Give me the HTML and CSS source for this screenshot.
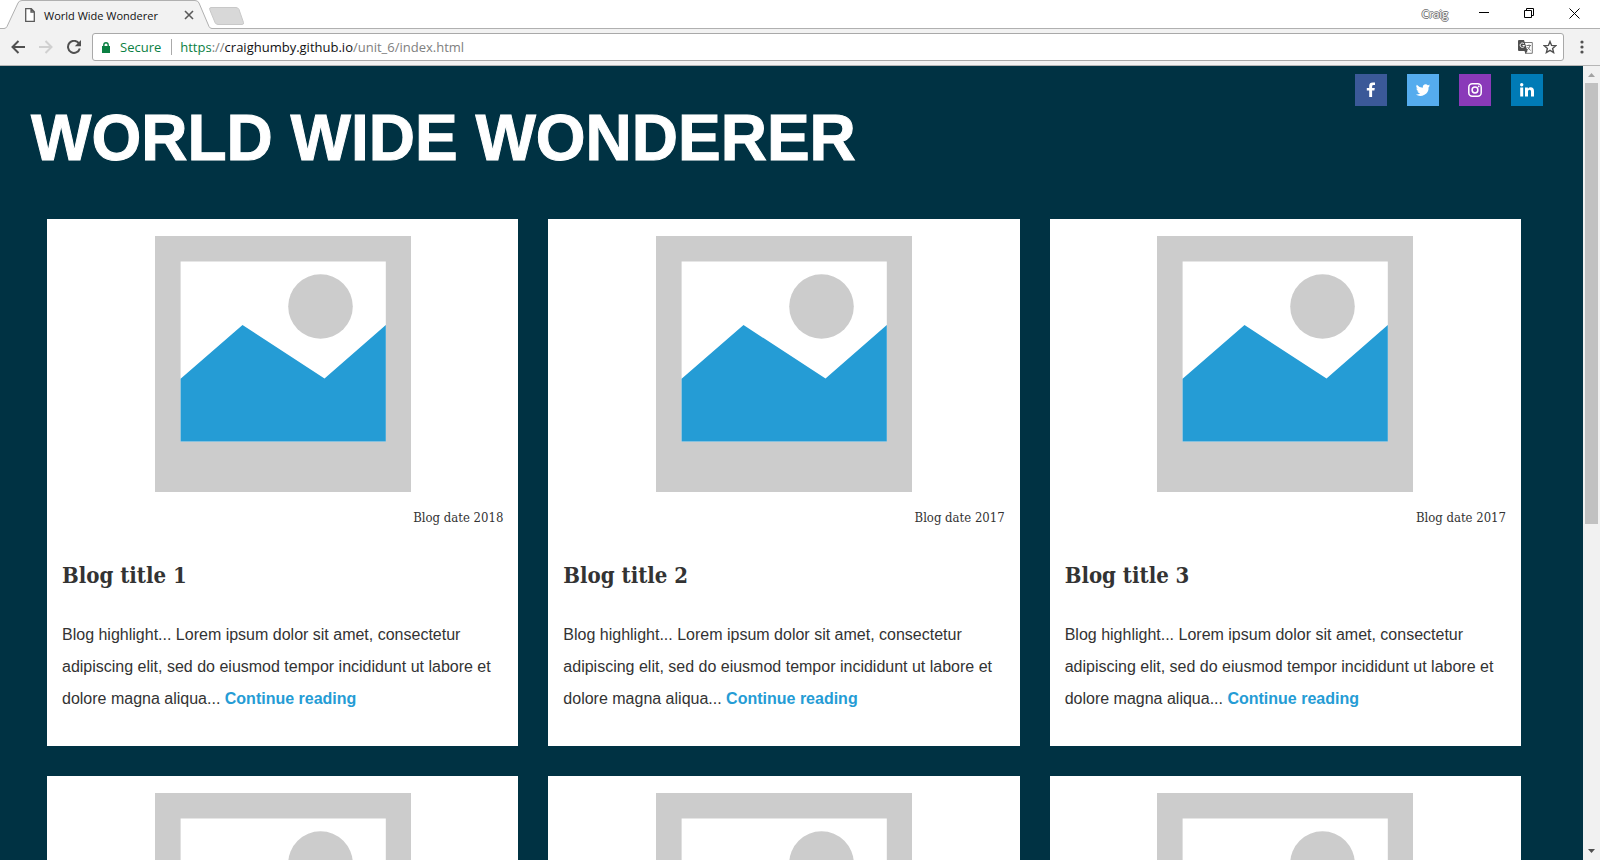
FILE: index.html
```html
<!DOCTYPE html>
<html lang="en">
<head>
<meta charset="utf-8">
<title>World Wide Wonderer</title>
<link rel="stylesheet" href="styles.css">
</head>
<body>
<svg class="defs" aria-hidden="true">
  <symbol id="photo" viewBox="0 0 256 256">
    <path fill="#ccc" d="M0 0h256v256H0z"/>
    <path fill="#fff" d="M25.600 25.600h205.200v180H25.600z"/>
    <circle cx="165.500" cy="70.500" r="32.300" fill="#ccc"/>
    <path fill="#259cd5" d="M25.600 142.700 87.500 89l82 53.500 61.300-53.500v116.500H25.600z"/>
  </symbol>
</svg>
<div class="browser">
  <div class="tabstrip">
    <div class="tab">
      <svg class="tab-shape" width="214" height="29" viewBox="0 0 214 29" aria-hidden="true"><path d="M0 28.500h4q2 0 3-2L18 3q1-2.500 4-2.500h173q3 0 4 2.500l10 23.500q1 2 3 2h2V29H0z" fill="#f2f2f2"/><path d="M0 28.500h4q2 0 3-2L18 3q1-2.500 4-2.500h173q3 0 4 2.500l10 23.500q1 2 3 2h2" fill="none" stroke="#b0b0b0"/></svg>
      <div class="tab-content">
        <svg width="10" height="14" viewBox="0 0 10 14" aria-hidden="true"><path d="M.7.700h5.600l3 3v9.600H.7zM6 .7V4h3.300" fill="#fff" stroke="#5a5a5a" stroke-width="1.300"/></svg>
        <span class="tab-title">World Wide Wonderer</span>
        <button class="plain" aria-label="Close tab"><svg width="10" height="10" viewBox="0 0 10 10"><path d="m1 1 8 8M9 1 1 9" stroke="#5a5a5a" stroke-width="1.600"/></svg></button>
      </div>
    </div>
    <button class="plain new-tab" aria-label="New tab"><svg width="35" height="18" viewBox="0 0 35 18"><path d="M2 .5h25q2 0 3 2l4.500 13q.5 2-1.500 2H9q-2 0-3-2L.7 2.500Q.2.500 2 .5z" fill="#d8d8d8" stroke="#c8c8c8"/></svg></button>
    <div class="window-controls">
      <span class="user">Craig</span>
      <button class="plain" aria-label="Minimize"><svg width="10" height="10" viewBox="0 0 10 10"><path d="M0 4.500h10" stroke="#000"/></svg></button>
      <button class="plain" aria-label="Restore"><svg width="10" height="10" viewBox="0 0 10 10"><path d="M.5 2.500h7v7h-7zM2.500 2V.5h7v7H8" fill="none" stroke="#000"/></svg></button>
      <button class="plain" aria-label="Close"><svg width="11" height="11" viewBox="0 0 11 11"><path d="m.5.500 10 10M10.500.500l-10 10" stroke="#000"/></svg></button>
    </div>
  </div>
  <div class="toolbar">
    <button class="plain" aria-label="Back"><svg width="14" height="14" viewBox="0 0 14 14"><path d="M14 7H1.500M7.500 1l-6 6 6 6" fill="none" stroke="#505050" stroke-width="2"/></svg></button>
    <button class="plain" aria-label="Forward"><svg width="14" height="14" viewBox="0 0 14 14"><path d="M0 7h12.500M6.500 1l6 6-6 6" fill="none" stroke="#d0d0d0" stroke-width="2"/></svg></button>
    <button class="plain" aria-label="Reload"><svg width="14" height="14" viewBox="0 0 14 14"><path d="M12 3.500A6 6 0 1 0 12.800 8.500" fill="none" stroke="#505050" stroke-width="2"/><path d="M14 0v6.200H7.800z" fill="#505050"/></svg></button>
    <div class="address">
      <svg width="8" height="11" viewBox="0 0 8 11" aria-hidden="true"><path d="M0 4h8v7H0z" fill="#0b8043"/><path d="M1.800 4.500V3a2.200 2.200 0 0 1 4.400 0v1.500" fill="none" stroke="#0b8043" stroke-width="1.400"/></svg>
      <span class="secure">Secure</span>
      <span class="url"><span class="scheme">https</span>://<span class="host">craighumby.github.io</span>/unit_6/index.html</span>
      <button class="plain" aria-label="Translate"><svg width="15" height="14" viewBox="0 0 15 14"><path d="M6 2.500h8.300v10.800H7.500" fill="#fff" stroke="#777"/><path d="M0 1q0-1 1-1h5l3.500 11H1q-1 0-1-1zM6.500 11h3l-2 3z" fill="#505050"/><path d="M6 3.800A2.200 2.200 0 1 0 6.500 5.500H4.500" fill="none" stroke="#fff"/><path d="M8.500 5.500h4.500M11 4.500v1M12 5.500q-.5 3-3 4.500M9.500 7l3 3.500" fill="none" stroke="#777"/></svg></button>
      <button class="plain" aria-label="Bookmark"><svg width="14" height="14" viewBox="0 0 14 14"><path d="m7 1.500 1.600 3.900 4.200.3-3.200 2.700 1 4.100L7 10.300l-3.600 2.200 1-4.100-3.200-2.700 4.200-.3z" fill="none" stroke="#505050" stroke-width="1.400"/></svg></button>
    </div>
    <button class="plain" aria-label="Menu"><svg width="4" height="14" viewBox="0 0 4 14"><g fill="#505050"><circle cx="2" cy="2" r="1.600"/><circle cx="2" cy="7" r="1.600"/><circle cx="2" cy="12" r="1.600"/></g></svg></button>
  </div>
  <div class="viewport">
    <div class="page">
      <header class="site-header">
        <h1>WORLD WIDE WONDERER</h1>
        <nav class="social" aria-label="Social links">
          <a class="facebook" href="#facebook" aria-label="Facebook"><svg width="16" height="16" viewBox="0 0 16 16"><path fill="#fff" d="M12 .6v2.500h-1.400q-1.500 0-1.500 1.400v1.400h2.700l-.4 2.600H9.100V15H6.200V8.500H3.800V5.900h2.400V3.900Q6.200.5 9.800.5q1.500 0 2.200.1z"/></svg></a>
          <a class="twitter" href="#twitter" aria-label="Twitter"><svg width="16" height="16" viewBox="0 0 24 24"><path fill="#fff" d="M22.600 5.400c-.8.400-1.600.6-2.500.7.900-.5 1.600-1.400 1.900-2.400-.8.500-1.800.9-2.800 1.100A4.400 4.400 0 0 0 11.700 8.700 12.500 12.500 0 0 1 2.700 4.100a4.400 4.400 0 0 0 1.400 5.900c-.7 0-1.400-.2-2-.6a4.400 4.400 0 0 0 3.500 4.400c-.6.200-1.300.2-2 .1a4.400 4.400 0 0 0 4.100 3.100 8.800 8.800 0 0 1-6.500 1.800A12.500 12.500 0 0 0 20.400 7.700c.9-.6 1.600-1.400 2.200-2.300z"/></svg></a>
          <a class="instagram" href="#instagram" aria-label="Instagram"><svg width="16" height="16" viewBox="0 0 16 16"><rect x="1.800" y="1.800" width="12.400" height="12.400" rx="3.500" fill="none" stroke="#fff" stroke-width="1.500"/><circle cx="8" cy="8" r="2.900" fill="none" stroke="#fff" stroke-width="1.500"/><circle cx="11.700" cy="4.400" r=".9" fill="#fff"/></svg></a>
          <a class="linkedin" href="#linkedin" aria-label="LinkedIn"><svg width="16" height="16" viewBox="0 0 16 16"><path fill="#fff" d="M1.200 5.500h3V14.500h-3zM6 5.500h2.900v1.200Q9.800 5.300 11.600 5.300q3.400 0 3.400 3.800V14.500h-3V9.600q0-1.900-1.500-1.900Q9 7.700 9 9.600V14.500H6z"/><circle cx="2.700" cy="2.700" r="1.700" fill="#fff"/></svg></a>
        </nav>
      </header>
      <main class="cards">
        <article class="card">
          <svg class="photo" role="img" aria-label="Placeholder"><use href="#photo"/></svg>
          <p class="date">Blog date 2018</p>
          <h2>Blog title 1</h2>
          <p>Blog highlight... Lorem ipsum dolor sit amet, consectetur adipiscing elit, sed do eiusmod tempor incididunt ut labore et dolore magna aliqua... <a href="#post-1">Continue reading</a></p>
        </article>
        <article class="card">
          <svg class="photo" role="img" aria-label="Placeholder"><use href="#photo"/></svg>
          <p class="date">Blog date 2017</p>
          <h2>Blog title 2</h2>
          <p>Blog highlight... Lorem ipsum dolor sit amet, consectetur adipiscing elit, sed do eiusmod tempor incididunt ut labore et dolore magna aliqua... <a href="#post-2">Continue reading</a></p>
        </article>
        <article class="card">
          <svg class="photo" role="img" aria-label="Placeholder"><use href="#photo"/></svg>
          <p class="date">Blog date 2017</p>
          <h2>Blog title 3</h2>
          <p>Blog highlight... Lorem ipsum dolor sit amet, consectetur adipiscing elit, sed do eiusmod tempor incididunt ut labore et dolore magna aliqua... <a href="#post-3">Continue reading</a></p>
        </article>
        <article class="card"><svg class="photo" role="img" aria-label="Placeholder"><use href="#photo"/></svg></article>
        <article class="card"><svg class="photo" role="img" aria-label="Placeholder"><use href="#photo"/></svg></article>
        <article class="card"><svg class="photo" role="img" aria-label="Placeholder"><use href="#photo"/></svg></article>
      </main>
    </div>
    <div class="scrollbar" aria-hidden="true">
      <svg width="17" height="17" viewBox="0 0 17 17"><path d="M5 11h7L8.500 7z" fill="#a3a3a3"/></svg>
      <div class="track"><div class="thumb"></div></div>
      <svg width="17" height="17" viewBox="0 0 17 17"><path d="M5 6h7l-3.500 4z" fill="#505050"/></svg>
    </div>
  </div>
</div>
</body>
</html>
```
FILE: styles.css
```css
* { box-sizing: border-box; }

body {
  margin: 0;
  font-family: "Liberation Sans", Arial, sans-serif;
  font-size: 16px;
  color: #333;
}

svg { display: block; flex: none; }

.defs { position: absolute; width: 0; height: 0; }

.plain {
  padding: 0;
  border: 0;
  background: none;
  flex: none;
}

.browser {
  display: flex;
  flex-direction: column;
  height: 100vh;
  overflow: hidden;
  font-family: "Open Sans", "Noto Sans", sans-serif;
}

/* Tab strip */
.tabstrip {
  display: flex;
  flex: none;
  height: 29px;
  background: #fff;
  border-bottom: 1px solid #b0b0b0;
}

.tab { display: grid; height: 29px; }
.tab > * { grid-area: 1 / 1; }

.tab-content {
  display: flex;
  align-items: center;
  padding: 1px 20px 0 25px;
  font-size: 11px;
  color: #111;
  z-index: 1;
}

.tab-title { flex: 1; padding-left: 9px; white-space: nowrap; }

.new-tab { align-self: flex-start; padding-top: 7px; margin-left: -5px; }

.window-controls {
  display: flex;
  align-items: center;
  gap: 35px;
  margin-left: auto;
  padding: 0 20px 2px 0;
}

.user {
  margin-right: -4px;
  font-size: 11px;
  color: #fff;
  text-shadow: 1px 0 #777, -1px 0 #777, 0 1px #777, 0 -1px #777;
}

/* Toolbar */
.toolbar {
  display: flex;
  flex: none;
  align-items: center;
  gap: 14px;
  height: 37px;
  padding: 0 16px 0 11px;
  background: #f2f2f2;
  border-bottom: 1px solid #b6b6b6;
}

.address {
  display: flex;
  flex: 1;
  align-items: center;
  gap: 10px;
  height: 28px;
  margin: 0 2px 0 -3px;
  padding: 0 6px 0 9px;
  background: #fff;
  border: 1px solid #a9a9a9;
  border-radius: 3px;
  font-size: 13px;
  line-height: 16px;
}

.secure { padding-right: 10px; border-right: 1px solid #aaa; color: #0b8043; }
.url { flex: 1; margin-left: -2px; color: #808080; }
.scheme { color: #0b8043; }
.host { color: #111; }

/* Blog page */
.viewport {
  display: flex;
  flex: 1;
  min-height: 0;
  background: #003243;
}

.page {
  flex: 1;
  overflow: hidden;
  font-family: "Liberation Sans", Arial, sans-serif;
}

.site-header {
  display: flex;
  justify-content: space-between;
  align-items: flex-start;
  padding: 8px 40px 32px 31px;
}

h1 {
  margin: 0;
  padding: 20px 0 5px;
  font-size: 64px;
  line-height: 88px;
  color: #fff;
  -webkit-text-stroke: 1px #fff;
}

.social { display: flex; gap: 20px; }

.social a {
  display: grid;
  place-items: center;
  width: 32px;
  height: 32px;
}

.facebook { background: #3b5998; }
.twitter { background: #55acee; }
.instagram { background: #8a3ab9; }
.linkedin { background: #007bb6; }

.cards {
  display: grid;
  grid-template-columns: repeat(3, 1fr);
  gap: 30px;
  padding: 0 62px 30px 47px;
}

.card {
  padding: 17px 15px 31px;
  background: #fff;
}

.photo { width: 256px; height: 256px; margin: 0 auto; }

.card p { margin: 0; line-height: 32px; }

.card .date {
  margin-top: 10px;
  font-family: "DejaVu Serif Condensed", "DejaVu Serif", serif;
  font-size: 13px;
  text-align: right;
}

h2 {
  margin: 24px 0 27px;
  font-family: "DejaVu Serif Condensed", "DejaVu Serif", serif;
  font-size: 22px;
  line-height: 34px;
}

.card a { font-weight: bold; color: #259cd5; text-decoration: none; }

/* Scrollbar */
.scrollbar {
  display: flex;
  flex-direction: column;
  flex: none;
  width: 17px;
  background: #f1f1f1;
}

.track { flex: 1; padding: 0 2px; }
.thumb { height: 58%; background: #c1c1c1; }
```
